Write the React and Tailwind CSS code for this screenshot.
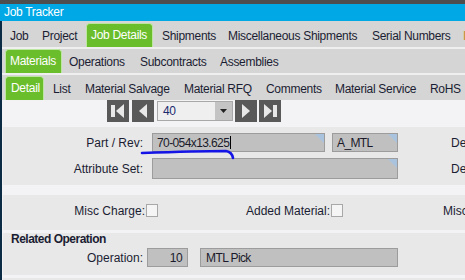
import React from 'react';

// Job Tracker - Job Details / Materials / Detail

const Tab = ({ label, active, className }) => (
    <div
        className={
            active
                ? `h-[24px] leading-[23px] shrink-0 bg-[#6abd2b] text-white border-x border-t border-[#bde6a0] rounded-t-[4px] whitespace-nowrap ${className}`
                : `h-[24px] leading-[26px] shrink-0 whitespace-nowrap ${className}`
        }
    >
        {label}
    </div>
);

const Corner = () => (
    <span className="absolute right-0 top-0 w-[9px] h-[9px] bg-[#a9c3df] [clip-path:polygon(0_0,100%_0,100%_100%)]" />
);

const Field = ({ className, children, corner }) => (
    <div className={`relative shrink-0 bg-[#c0c0c0] border border-[#9c9c9c] flex items-center text-[#1a1a2a] tracking-[-0.6px] ${className}`}>
        {children}
        {corner && <Corner />}
    </div>
);

const NavButton = ({ children, className }) => (
    <div className={`w-[22px] h-[22px] bg-[#595959] shrink-0 ${className}`}>
        <svg width="22" height="22" viewBox="0 0 22 22">{children}</svg>
    </div>
);

const Check = ({ className }) => (
    <div className={`w-[12px] h-[13px] bg-[#f5f5f5] border border-[#a8a8a8] shrink-0 ${className}`} />
);

export default function App() {
    return (
        <div className="w-[465px] h-[280px] overflow-hidden relative bg-[#f3f3f5] font-['Liberation_Sans',Arial,sans-serif] text-[12px] tracking-[-0.3px] text-[#1b1d33]">
            <div className="h-[4px] bg-[#4e4e4e]" />
            <div className="h-[17px] leading-[17px] bg-[#00a8e6] pl-[4px] text-white">Job Tracker</div>

            <div className="flex">
                <div className="w-[2px] shrink-0 bg-[#0b2a44]" />
                <div className="flex-1 min-w-0">
                    {/* top level tabs */}
                    <div className="h-[26px] bg-[#d5d5d5] flex items-end overflow-hidden">
                        <Tab label="Job" className="w-[34px] pl-[8px]" />
                        <Tab label="Project" className="w-[50px] pl-[6px]" />
                        <Tab label="Job Details" active className="w-[67px] pl-[4px]" />
                        <Tab label="Shipments" className="w-[70px] pl-[9px]" />
                        <Tab label="Miscellaneous Shipments" className="w-[144px] pl-[5px]" />
                        <Tab label="Serial Numbers" className="w-[90px] pl-[5px]" />
                        <Tab label="Inspection" className="pl-[6px] text-[#c98a2e]" />
                    </div>
                    <div className="h-[2px] bg-[#efefef]" />

                    <div className="h-[24px] bg-[#d5d5d5] flex items-end overflow-hidden">
                        <Tab label="Materials" active className="ml-[3px] w-[57px] pl-[4px]" />
                        <Tab label="Operations" className="w-[72px] pl-[7px]" />
                        <Tab label="Subcontracts" className="w-[80px] pl-[6px]" />
                        <Tab label="Assemblies" className="pl-[6px]" />
                    </div>
                    <div className="h-[2px] bg-[#efefef]" />

                    <div className="h-[25px] bg-[#d5d5d5] flex items-end overflow-hidden">
                        <Tab label="Detail" active className="ml-[3px] w-[39px] pl-[5px]" />
                        <Tab label="List" className="w-[35px] pl-[9px]" />
                        <Tab label="Material Salvage" className="w-[99px] pl-[6px]" />
                        <Tab label="Material RFQ" className="w-[82px] pl-[6px]" />
                        <Tab label="Comments" className="w-[69px] pl-[6px]" />
                        <Tab label="Material Service" className="w-[95px] pl-[6px]" />
                        <Tab label="RoHS" className="pl-[6px]" />
                    </div>

                    {/* record navigation */}
                    <div className="h-[27px] flex items-start">
                        <NavButton className="ml-[105px]">
                            <rect x="4" y="5" width="4" height="12" fill="#e8e8e8" />
                            <polygon points="17,4 9,11 17,18" fill="#e8e8e8" />
                        </NavButton>
                        <NavButton className="ml-[3px]">
                            <polygon points="15,4 7,11 15,18" fill="#e8e8e8" />
                        </NavButton>
                        <div className="ml-[3px] mt-[1px] w-[76px] h-[20px] border border-[#a8a8a8] flex shrink-0">
                            <div className="flex-1 bg-[#efefef] pl-[5px] leading-[18px] text-[#1c2a6e]">40</div>
                            <div className="w-[17px] bg-[#c4c4c4] flex items-center justify-center">
                                <svg width="7" height="4" viewBox="0 0 7 4"><polygon points="0,0 7,0 3.5,4" fill="#222" /></svg>
                            </div>
                        </div>
                        <NavButton className="ml-[2px]">
                            <polygon points="7,4 15,11 7,18" fill="#e8e8e8" />
                        </NavButton>
                        <NavButton className="ml-[2px]">
                            <polygon points="5,4 13,11 5,18" fill="#e8e8e8" />
                            <rect x="14" y="5" width="4" height="12" fill="#e8e8e8" />
                        </NavButton>
                    </div>

                    {/* part panel */}
                    <div className="ml-[1px] h-[58px] bg-[#e8e8e8] pt-[6px] tracking-normal">
                        <div className="flex items-center h-[19px]">
                            <div className="w-[140px] text-right shrink-0">Part / Rev:</div>
                            <Field className="ml-[9px] w-[173px] h-[19px] pl-[4px]" corner>
                                <span>70-054x13.625</span>
                                <span className="w-[1px] h-[13px] bg-black ml-[1px]" />
                            </Field>
                            <Field className="ml-[7px] w-[66px] h-[19px] pl-[4px]" corner>A_MTL</Field>
                            <div className="ml-[53px] whitespace-nowrap">Description</div>
                        </div>
                        <div className="flex items-center h-[21px] mt-[6px]">
                            <div className="w-[140px] text-right shrink-0">Attribute Set:</div>
                            <Field className="ml-[9px] w-[246px] h-[21px]" corner />
                            <div className="ml-[53px] whitespace-nowrap">Description</div>
                        </div>
                    </div>

                    {/* flags panel */}
                    <div className="ml-[1px] mt-[10px] h-[35px] bg-[#e8e8e8] pt-[9px] tracking-normal">
                        <div className="flex items-center h-[13px]">
                            <div className="w-[142px] text-right shrink-0">Misc Charge:</div>
                            <Check className="ml-[1px]" />
                            <div className="w-[172px] text-right shrink-0">Added Material:</div>
                            <Check className="ml-[1px]" />
                            <div className="ml-[100px] whitespace-nowrap">Misc</div>
                        </div>
                    </div>

                    {/* related operation */}
                    <div className="ml-[1px] mt-[3px] h-[42px] bg-[#e8e8e8] tracking-normal">
                        <div className="pl-[8px] leading-[13px] font-bold tracking-[-0.5px]">Related Operation</div>
                        <div className="flex items-center h-[19px] mt-[2px]">
                            <div className="w-[140px] text-right shrink-0">Operation:</div>
                            <Field className="ml-[4px] w-[41px] h-[19px] justify-end pr-[5px]">10</Field>
                            <Field className="ml-[12px] w-[198px] h-[19px] pl-[5px]">MTL Pick</Field>
                        </div>
                    </div>
                    <div className="ml-[1px] mt-[3px] h-[20px] bg-[#e8e8e8]" />
                </div>
            </div>

            {/* hand drawn underline */}
            <svg className="absolute left-0 top-0 pointer-events-none" width="465" height="280" viewBox="0 0 465 280">
                <path d="M142 153 C 170 152, 200 151, 226 151 Q 232 152 233 158" fill="none" stroke="#1414e6" strokeWidth="2.6" strokeLinecap="round" />
            </svg>
        </div>
    );
}
